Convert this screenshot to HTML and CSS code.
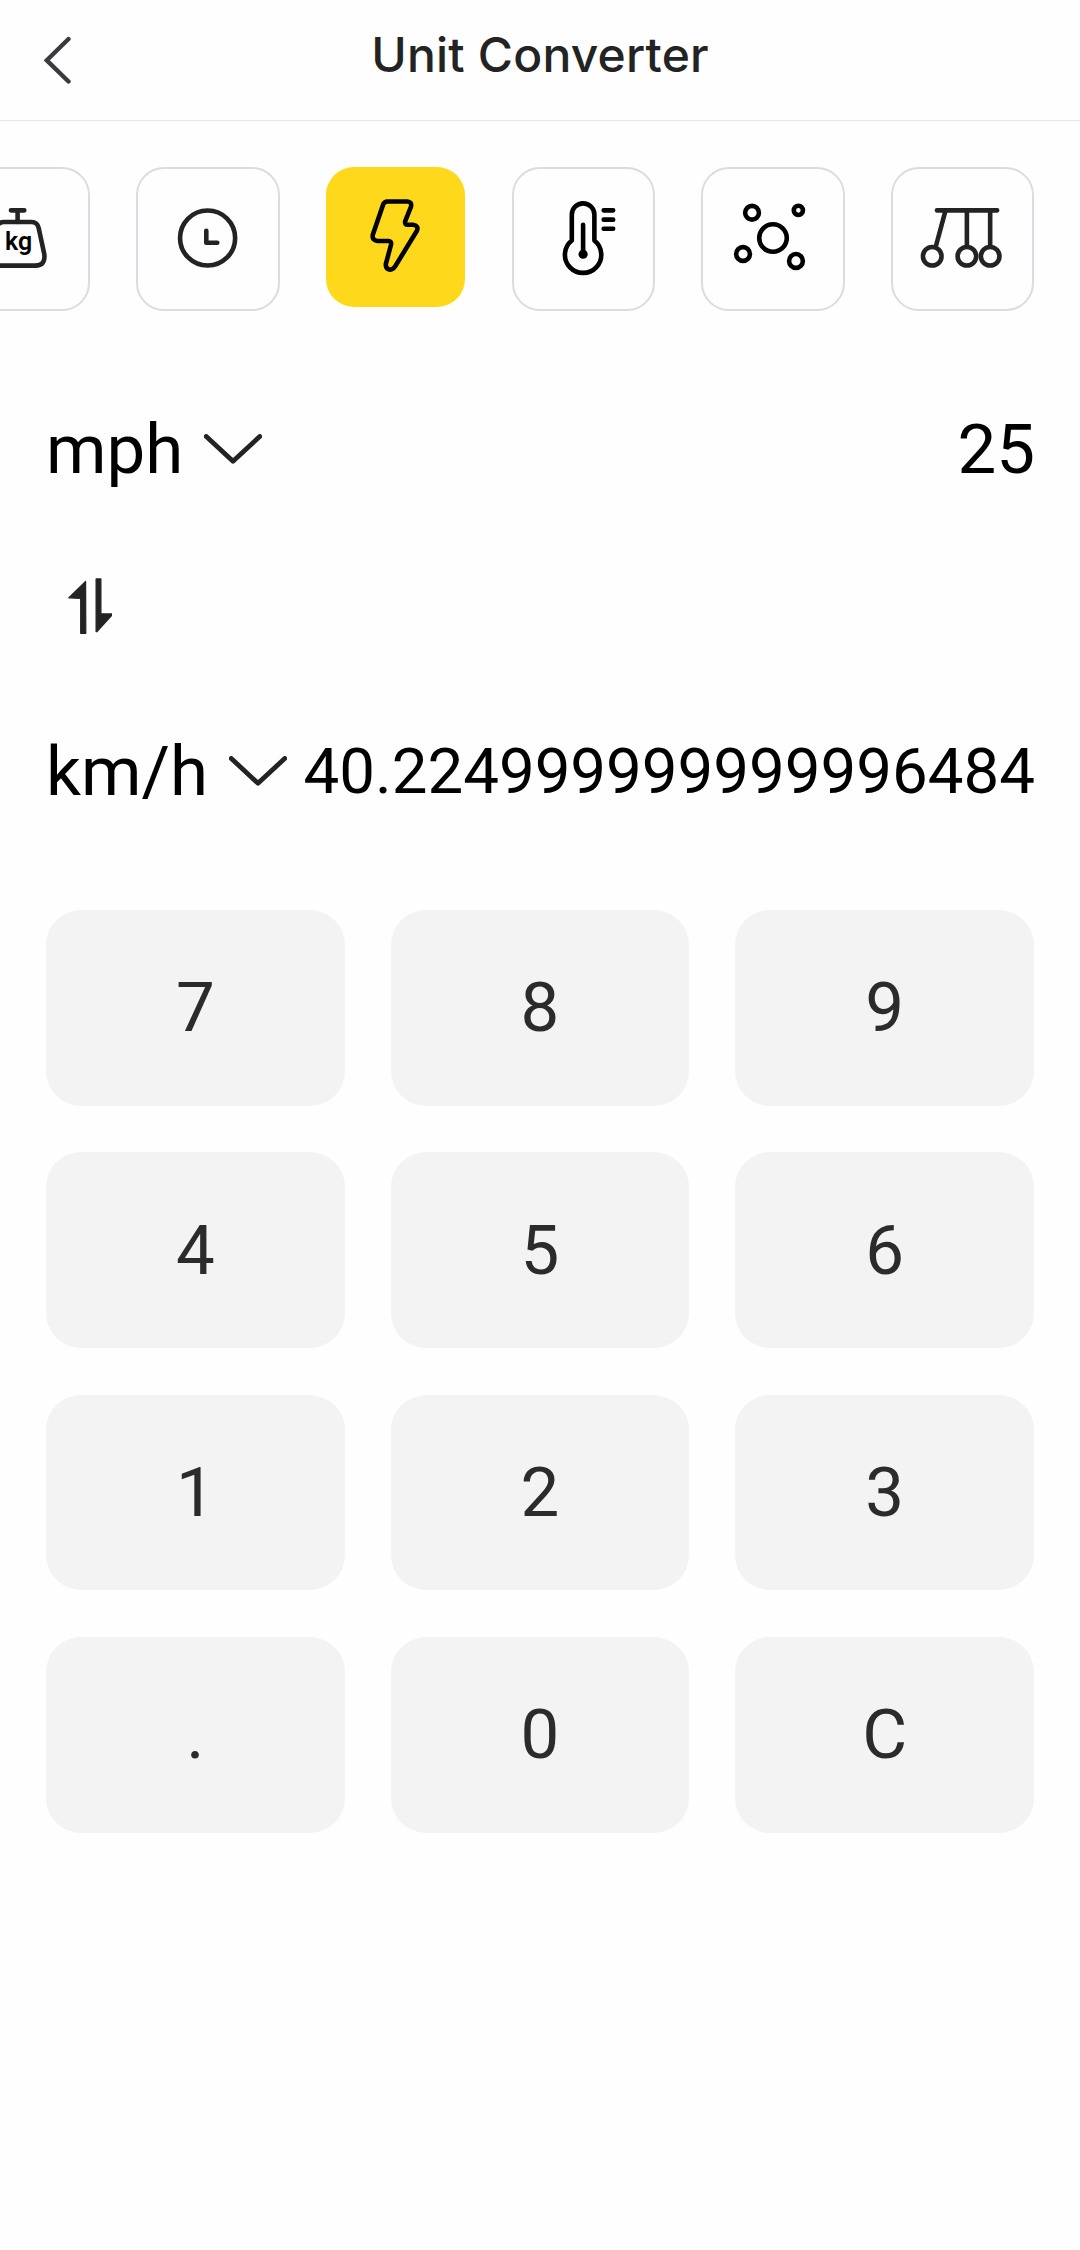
FILE: index.html
```html
<!DOCTYPE html>
<html lang="en">
  <head>
    <meta charset="UTF-8" />
    <meta name="viewport" content="width=device-width, initial-scale=1.0" />
    <title>Unit Converter</title>
    <link rel="stylesheet" href="styles.css">
  </head>
  <body>
    <header>
      <a href="#" class="back" aria-label="Back">
        <svg width="28" height="48" viewBox="0 0 28 48">
          <path d="M24.5 3 L2.8 24.3 L24.5 45.5" />
        </svg>
      </a>
      <h1 class="title">Unit Converter</h1>
    </header>

    <nav class="tabs">
      <a href="#" class="tab" aria-label="Weight">
        <svg class="icon soft" viewBox="0 0 139.5 139.5">
          <path d="M62 41.3 H75.4 M68.7 41.3 V53" />
          <path d="M54.9 53 H82.5 Q88.5 53 89.8 59 L95.4 85 Q97 96.7 86.4 96.7 H51 Q40.4 96.7 42 85 L47.6 59 Q48.9 53 54.9 53 Z" />
          <text x="69.7" y="81.3">kg</text>
        </svg>
      </a>
      <a href="#" class="tab" aria-label="Time">
        <svg class="icon soft" viewBox="0 0 139.5 139.5">
          <circle cx="69.7" cy="69" r="27.6" />
          <path d="M68.4 61.7 V73.7 H79.4" />
        </svg>
      </a>
      <a href="#" class="tab active" aria-label="Speed">
        <svg class="icon" viewBox="0 0 139.5 139.5">
          <path d="M61.5 34.5 H81.5 Q86.2 34.8 85.2 39.5 L79.4 54 Q78.6 57.8 82 57.8 H87 Q93.4 58.5 91 64 L69.2 99.6 Q66.5 103.6 62.8 102.4 Q59.6 101 60 97 L65.2 77.5 Q65.8 74.2 62.5 74 H51.5 Q46 73.5 46.9 67.8 L57.2 37.6 Q58.5 34.6 61.5 34.5 Z" />
        </svg>
      </a>
      <a href="#" class="tab" aria-label="Temperature">
        <svg class="icon" viewBox="0 0 139.5 139.5">
          <path d="M57.9 71.5 V45.6 A11.3 11.3 0 0 1 80.5 45.6 V71.5 A18.2 18.2 0 1 1 57.9 71.5 Z" />
          <path d="M69.2 55.7 V85" />
          <circle class="fill" cx="69.2" cy="85.3" r="4.6" />
          <path d="M89.8 41.3 H99.3 M89.8 50.6 H99.3 M89.8 59.8 H99.3" />
        </svg>
      </a>
      <a href="#" class="tab" aria-label="Amount">
        <svg class="icon" viewBox="0 0 139.5 139.5">
          <circle cx="70.1" cy="69" r="13.8" />
          <circle cx="49.1" cy="43.7" r="6.9" />
          <circle cx="95.5" cy="41.3" r="4.6" />
          <circle cx="40.1" cy="85" r="6.9" />
          <circle cx="93.1" cy="92" r="6.9" />
        </svg>
      </a>
      <a href="#" class="tab" aria-label="Force">
        <svg class="icon soft" viewBox="0 0 139.5 139.5">
          <path d="M44 41.3 H104.3 M52.3 42.5 L43 77 M74 42 V77 M97.3 42 V77" />
          <circle cx="39.3" cy="87.3" r="9.3" />
          <circle cx="74" cy="87.3" r="9.3" />
          <circle cx="97.3" cy="87.3" r="9.3" />
        </svg>
      </a>
    </nav>

    <main class="converter">
      <div class="row">
        <div class="unit">
          <span>mph</span>
          <svg class="chevron" viewBox="0 0 58 30">
            <path d="M2.3 2.5 L29 27.3 L55.7 2.5" />
          </svg>
        </div>
        <div class="value">25</div>
      </div>

      <div class="swap">
        <svg width="44" height="56" viewBox="0 0 44 56">
          <path d="M17.6 3.4 L0.9 19.8 L12.7 20.3 V55.3 H17.8 Z" />
          <path d="M28.1 0.9 H32.9 V35.9 H43.6 V37.5 L29 53.6 H28.1 Z" />
        </svg>
      </div>

      <div class="row">
        <div class="unit">
          <span>km/h</span>
          <svg class="chevron" viewBox="0 0 58 30">
            <path d="M2.3 2.5 L29 27.3 L55.7 2.5" />
          </svg>
        </div>
        <div class="value result">40.224999999999996484</div>
      </div>
    </main>

    <div class="keypad">
      <button class="key">7</button>
      <button class="key">8</button>
      <button class="key">9</button>
      <button class="key">4</button>
      <button class="key">5</button>
      <button class="key">6</button>
      <button class="key">1</button>
      <button class="key">2</button>
      <button class="key">3</button>
      <button class="key">.</button>
      <button class="key">0</button>
      <button class="key">C</button>
    </div>
  </body>
</html>
```
FILE: styles.css
```css
:root {
  --bg: #fefefe;
  --text: #000000;
  --text-soft: #232323;
  --accent: #fed91b;
  --border: #d9dce2;
  --key: #f3f3f3;
}

* {
  box-sizing: border-box;
  margin: 0;
  padding: 0;
}

body {
  min-height: 100vh;
  background: var(--bg);
  font-family: Roboto, sans-serif;
  color: var(--text);
  overflow-x: hidden;
}

header {
  height: 121px;
  padding: 0 44px;
  border-bottom: 1px solid #e6e6e6;
  display: grid;
  grid-template-columns: 60px 1fr 60px;
  align-items: center;
}

.back {
  display: flex;
}

.back path {
  fill: none;
  stroke: #3a3b40;
  stroke-width: 4.4;
  stroke-linecap: round;
}

.title {
  font-family: Inter, sans-serif;
  font-size: 48px;
  font-weight: 500;
  line-height: 56px;
  letter-spacing: 0.2px;
  text-align: center;
  color: var(--text-soft);
  padding-bottom: 11px;
}

/* scrolled to the end, so the first tab is cut off on the left */
.tabs {
  display: flex;
  justify-content: flex-end;
  align-items: flex-start;
  gap: 46.4px;
  padding: 46px 45.6px 0 0;
  height: 287px;
}

.tab {
  flex: none;
  width: 143.3px;
  height: 143.5px;
  border: 2px solid var(--border);
  border-radius: 28px;
}

.tab.active {
  width: 139.2px;
  height: 139.5px;
  border: none;
  background: var(--accent);
}

.icon {
  display: block;
  width: 100%;
  height: 100%;
  fill: none;
  stroke: var(--text);
  stroke-width: 4.6;
  stroke-linecap: round;
  stroke-linejoin: round;
}

.icon.soft {
  stroke: var(--text-soft);
}

.icon .fill {
  fill: var(--text);
  stroke: none;
}

.icon text {
  fill: var(--text);
  stroke: none;
  font-size: 25px;
  font-weight: 600;
  text-anchor: middle;
}

.converter {
  padding: 0 45px 0 46px;
}

.row {
  display: flex;
  justify-content: space-between;
  align-items: center;
  height: 82px;
}

.unit {
  display: flex;
  align-items: center;
  gap: 21px;
  font-size: 69px;
}

.chevron {
  width: 58px;
  height: 30px;
}

.chevron path {
  fill: none;
  stroke: var(--text-soft);
  stroke-width: 4.8;
  stroke-linecap: round;
  stroke-linejoin: round;
}

.value {
  font-size: 69px;
}

.value.result {
  font-size: 63.6px;
}

.swap {
  display: flex;
  height: 240px;
  padding: 88px 0 0 22px;
}

.swap path {
  fill: var(--text-soft);
  stroke: var(--text-soft);
  stroke-width: 1.2;
  stroke-linejoin: round;
}

.keypad {
  display: grid;
  grid-template-columns: repeat(3, 1fr);
  grid-auto-rows: 195.8px;
  gap: 46.5px 46px;
  padding: 98px 46px 0;
}

.key {
  border: none;
  border-radius: 35px;
  background: var(--key);
  font-family: inherit;
  font-size: 69px;
  color: #2b2b2b;
}
```
